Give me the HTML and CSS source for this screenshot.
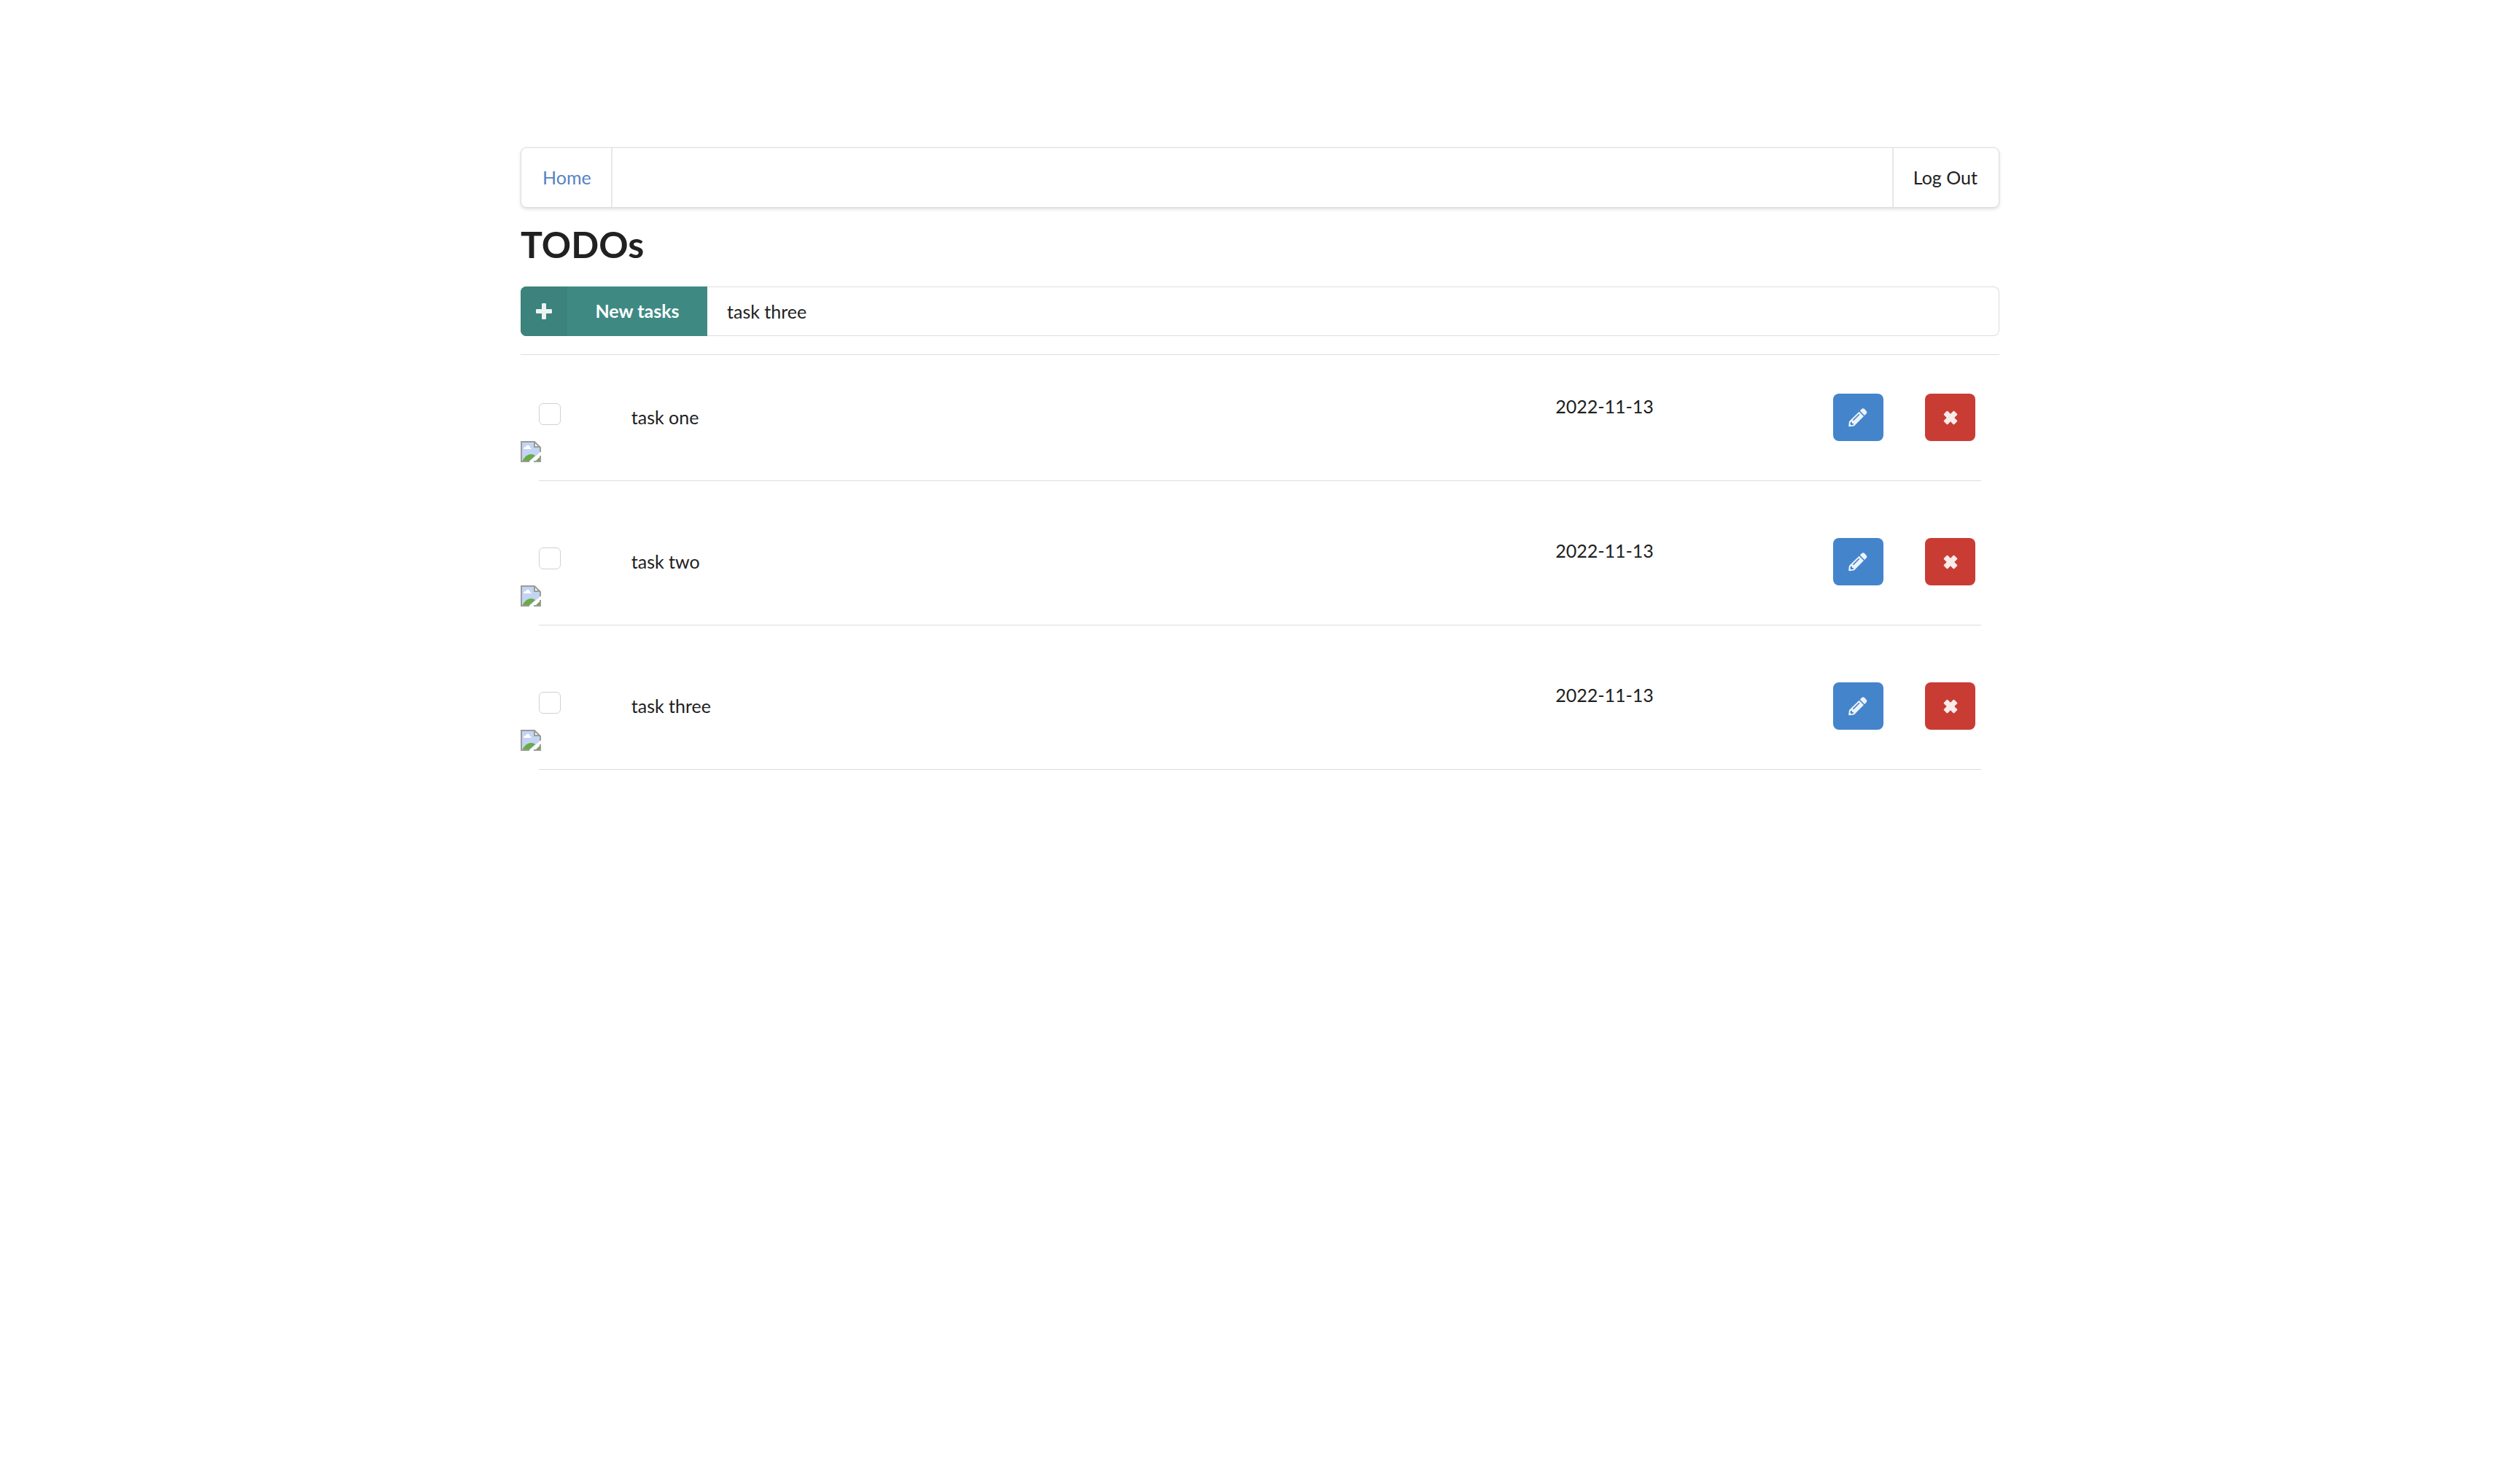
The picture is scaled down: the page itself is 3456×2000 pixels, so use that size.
FILE: index.html
```html
<!DOCTYPE html>
<html lang="en">
<head>
<meta charset="utf-8">
<meta name="viewport" content="width=device-width, initial-scale=1">
<title>TODOs</title>
<link rel="stylesheet" href="styles.css">
</head>
<body>
<svg class="sprite" aria-hidden="true">
  <symbol id="pencil" viewBox="0 0 26 26">
    <path fill-rule="evenodd" d="M14.600 4.700 21 11.100 8.200 23.900Q7.600 24.500 6.800 24.600L1.200 25.200Q.1 25.200.2 24.200L.9 18.600Q1 17.900 1.600 17.400ZM14 8 6.200 15.800A.8.8 0 0 0 7.300 16.900L15.100 9.100A.8.8 0 0 0 14 8ZM2.900 19.200 2.400 21.700 3.900 23.200 6.400 22.700 7.400 21.100 5 21 4.900 18.400Z"/>
    <path d="M15.800 3.500 18.200 1.100C19.300 0 20.900 0 22 1.100L24.500 3.700C25.600 4.800 25.600 6.300 24.500 7.400L22.100 9.900Z"/>
  </symbol>
  <symbol id="close" viewBox="0 0 20 20">
    <path d="M1 4.700 4.700 1Q5.500.3 6.300 1L10 4.800 13.700 1Q14.500.3 15.300 1L19 4.700Q19.700 5.500 19 6.300L15.200 10 19 13.700Q19.700 14.500 19 15.300L15.300 19Q14.500 19.700 13.700 19L10 15.200 6.300 19Q5.500 19.700 4.700 19L1 15.300Q.3 14.500 1 13.700L4.800 10 1 6.300Q.3 5.500 1 4.700Z"/>
  </symbol>
  <symbol id="broken" viewBox="0 0 28 29">
    <path fill="#c3d4f3" d="M1 1H19L27 9V15L12 28H1Z"/>
    <path fill="#fff" d="M4 11Q4 8 7 8 8 5 11 6 13 7 13 9 15 10 15 11Z"/>
    <path fill="#6aaa48" d="M2 28Q7 18 14 18 18 18 20 20L11 28ZM20 28 26 22V28Z"/>
    <path fill="#fff" d="M12 29 28 15V20L18 29ZM19 1V9H27Z"/>
    <path fill="none" stroke="#9b9b9b" stroke-width="2" d="M12 28H1V1H19L27 9V15M19 1V8H27M18 28H27V20"/>
  </symbol>
</svg>
<main class="container">
  <nav class="menu">
    <a class="item home" href="#">Home</a>
    <a class="item logout" href="#">Log Out</a>
  </nav>
  <h1>TODOs</h1>
  <form class="new-task">
    <button class="create" type="button">
      <span class="plus"><svg viewBox="0 0 22 22" aria-hidden="true"><path d="M9 0H13Q14 0 14 1V8H21Q22 8 22 9V13Q22 14 21 14H14V21Q14 22 13 22H9Q8 22 8 21V14H1Q0 14 0 13V9Q0 8 1 8H8V1Q8 0 9 0Z"/></svg></span>
      <span class="create-label">New tasks</span>
    </button>
    <input class="task-name" type="text" value="task three" aria-label="Task name">
  </form>
  <ul class="todos">
    <li class="todo">
      <div class="row">
        <div class="col"><input class="check" id="t1" type="checkbox"></div>
        <label class="col name" for="t1">task one</label>
        <time class="col date">2022-11-13</time>
        <div class="col"><button class="icon-button edit" type="button" aria-label="Edit"><svg><use href="#pencil"/></svg></button></div>
        <div class="col"><button class="icon-button delete" type="button" aria-label="Delete"><svg><use href="#close"/></svg></button></div>
      </div>
      <svg class="thumb" aria-hidden="true"><use href="#broken"/></svg>
    </li>
    <li class="todo">
      <div class="row">
        <div class="col"><input class="check" id="t2" type="checkbox"></div>
        <label class="col name" for="t2">task two</label>
        <time class="col date">2022-11-13</time>
        <div class="col"><button class="icon-button edit" type="button" aria-label="Edit"><svg><use href="#pencil"/></svg></button></div>
        <div class="col"><button class="icon-button delete" type="button" aria-label="Delete"><svg><use href="#close"/></svg></button></div>
      </div>
      <svg class="thumb" aria-hidden="true"><use href="#broken"/></svg>
    </li>
    <li class="todo">
      <div class="row">
        <div class="col"><input class="check" id="t3" type="checkbox"></div>
        <label class="col name" for="t3">task three</label>
        <time class="col date">2022-11-13</time>
        <div class="col"><button class="icon-button edit" type="button" aria-label="Edit"><svg><use href="#pencil"/></svg></button></div>
        <div class="col"><button class="icon-button delete" type="button" aria-label="Delete"><svg><use href="#close"/></svg></button></div>
      </div>
      <svg class="thumb" aria-hidden="true"><use href="#broken"/></svg>
    </li>
  </ul>
</main>
</body>
</html>
```

FILE: styles.css
```css
* { box-sizing: border-box; }

body {
  margin: 0;
  background: #fff;
  color: #212121;
  font: 25px/34px Lato, sans-serif;
}

.sprite { display: none; }

.container {
  max-width: 2028px;
  margin: 0 auto;
  padding-top: 202px;
}

.menu {
  display: flex;
  justify-content: space-between;
  border: 1px solid #dcdddd;
  border-radius: 8px;
  background: #fff;
  box-shadow: 0 2px 4px rgba(34, 36, 38, .15);
}

.item {
  padding: 23px 29px 24px;
  color: #212121;
  text-decoration: none;
}

.home {
  padding-right: 27px;
  border-right: 2px solid #e8e8e8;
  color: #5484c4;
}

.logout {
  padding-left: 27px;
  border-left: 2px solid #e8e8e8;
}

h1 {
  margin: 18px 0 26px;
  font-size: 50px;
  line-height: 64px;
}

.new-task {
  display: flex;
  height: 68px;
}

button {
  padding: 0;
  border: 0;
  color: #fff;
  font: inherit;
  cursor: pointer;
}

svg { fill: currentColor; }

.create {
  display: flex;
  width: 256px;
  overflow: hidden;
  border-radius: 8px 0 0 8px;
  background: #3e8a83;
  font-weight: 700;
}

.plus {
  display: flex;
  align-items: center;
  justify-content: center;
  align-self: stretch;
  width: 64px;
  background: #3b837c;
  color: #ebf3f2;
}

.plus svg { width: 22px; height: 22px; }

.create-label {
  flex: 1;
  align-self: center;
  padding-bottom: 2px;
}

.task-name {
  flex: 1;
  min-width: 0;
  padding: 0 27px;
  border: 1px solid #dcdddd;
  border-left: 0;
  border-radius: 0 8px 8px 0;
  outline: 0;
  background: #fff;
  color: #212121;
  font: inherit;
}

.todos {
  margin: 25px 0 0;
  padding: 0;
  border-top: 1px solid #dcdddd;
  list-style: none;
}

.todo {
  padding-top: 53px;
  margin-bottom: 25px;
}

.todo::after {
  display: block;
  height: 1px;
  margin: 25px 25px 0;
  background: #dcdddd;
  content: "";
}

.row {
  display: grid;
  grid-template-columns: 1fr 10fr 3fr 1fr 1fr;
  height: 65px;
}

.col {
  min-width: 0;
  padding-left: 25px;
}

.name { padding-top: 15px; }

.check {
  display: block;
  width: 30px;
  height: 30px;
  margin: 13px 0 0;
  border: 1px solid #d0d1d1;
  border-radius: 6px;
  appearance: none;
  background: #fff;
}

.icon-button {
  display: flex;
  align-items: center;
  justify-content: center;
  width: 69px;
  height: 65px;
  border-radius: 8px;
}

.edit { background: #4484cb; color: #ecf3fa; }
.edit svg { width: 26px; height: 26px; }

.delete { background: #c93c34; color: #faebeb; }
.delete svg { width: 20px; height: 20px; }

.thumb {
  display: block;
  width: 28px;
  height: 29px;
}
```
